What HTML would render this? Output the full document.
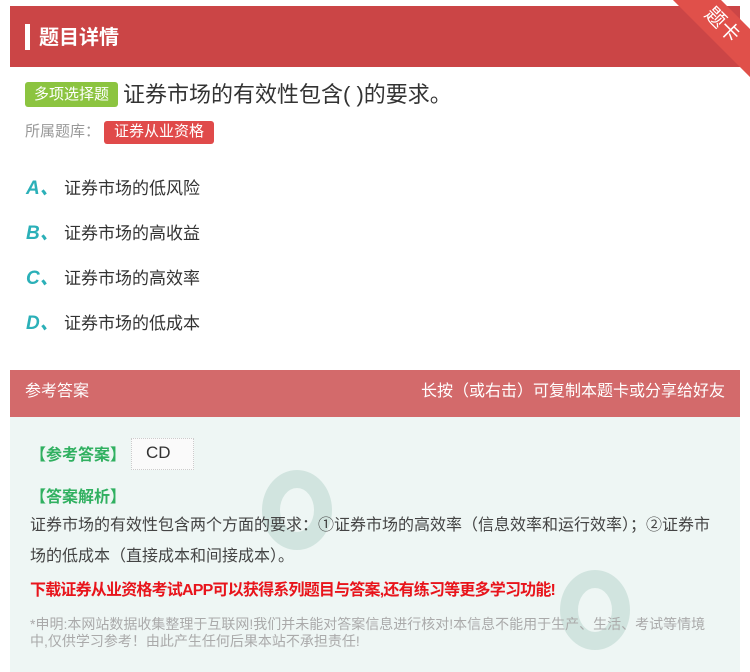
<!DOCTYPE html>
<html><head><meta charset="utf-8"><style>
*{margin:0;padding:0;box-sizing:border-box}
body{width:750px;height:672px;background:#fff;font-family:"Liberation Sans","Noto Sans CJK SC",sans-serif;position:relative;overflow:hidden}
.hd{position:absolute;left:10px;top:6px;width:730px;height:61px;background:#cb4546}
.hd .bar{position:absolute;left:15px;top:18px;width:5px;height:26px;background:#fff}
.hd .t{position:absolute;left:29px;top:15px;color:#fff;font-size:20px;font-weight:bold}
.rib{position:absolute;top:8px;width:140px;height:34px;background:#e0504a;transform:rotate(45deg);transform-origin:center;color:#fff;font-size:20px;text-align:center;line-height:34px;left:652px}
.q{position:absolute;left:25px;top:77px;font-size:22px;color:#333;white-space:nowrap}
.tag{display:inline-block;background:#8cc440;color:#fff;font-size:15px;padding:0 9px;height:25px;line-height:25px;border-radius:3px;vertical-align:3px;margin-right:5px}
.lib{position:absolute;left:25px;top:120px;font-size:15px;color:#999}
.lib span{display:inline-block;background:#e04a4a;color:#fff;padding:0 10px;height:23px;line-height:22px;border-radius:3px;margin-left:4px}
.op{position:absolute;left:26px;font-size:17px;color:#333}
.op b{color:#2bb0b8;font-style:italic;font-size:19px;display:inline-block;width:38px}
.ah{position:absolute;left:10px;top:370px;width:730px;height:47px;background:#d36a6b;color:#fff;font-size:16px;line-height:44px;padding:0 15px}
.ah span{float:right}
.ab{position:absolute;left:10px;top:417px;width:730px;height:255px;background:#eef6f4}
.g{position:absolute;color:#30b060;font-size:16px;font-weight:bold}
.p{position:absolute;left:30px;width:690px;font-size:16px;color:#444;line-height:31px}
.red{position:absolute;left:30px;top:576px;font-size:16px;color:#e8141b;font-weight:bold;letter-spacing:-0.8px}
.n{position:absolute;left:30px;top:616px;width:690px;font-size:14px;color:#aaa;line-height:17px}
.cd{position:absolute;left:131px;top:438px;width:63px;height:32px;background:#fafafa;border:1px dotted #ccc;font-size:17px;color:#333;padding:4px 0 0 14px}
.c{position:absolute;border-radius:50%;border:18px solid #c5ddd6;opacity:.7}
</style></head><body>
<div class="hd"><div class="bar"></div><div class="t">题目详情</div></div>
<div class="rib">题卡</div>
<div class="q"><span class="tag">多项选择题</span>证券市场的有效性包含( )的要求。</div>
<div class="lib">所属题库：<span>证券从业资格</span></div>
<div class="op" style="top:173px"><b>A、</b>证券市场的低风险</div>
<div class="op" style="top:218px"><b>B、</b>证券市场的高收益</div>
<div class="op" style="top:263px"><b>C、</b>证券市场的高效率</div>
<div class="op" style="top:308px"><b>D、</b>证券市场的低成本</div>
<div class="ah">参考答案<span>长按（或右击）可复制本题卡或分享给好友</span></div>
<div class="ab"></div>
<div class="c" style="left:262px;top:470px;width:70px;height:80px"></div>
<div class="c" style="left:560px;top:570px;width:70px;height:80px"></div>
<div class="g" style="left:30px;top:441px">【参考答案】</div>
<div class="cd">CD</div>
<div class="g" style="left:30px;top:483px">【答案解析】</div>
<div class="p" style="top:510px">证券市场的有效性包含两个方面的要求：①证券市场的高效率（信息效率和运行效率）；②证券市场的低成本（直接成本和间接成本）。</div>
<div class="red">下载证券从业资格考试APP可以获得系列题目与答案,还有练习等更多学习功能!</div>
<div class="n">*申明:本网站数据收集整理于互联网!我们并未能对答案信息进行核对!本信息不能用于生产、生活、考试等情境中,仅供学习参考！由此产生任何后果本站不承担责任!</div>
</body></html>
